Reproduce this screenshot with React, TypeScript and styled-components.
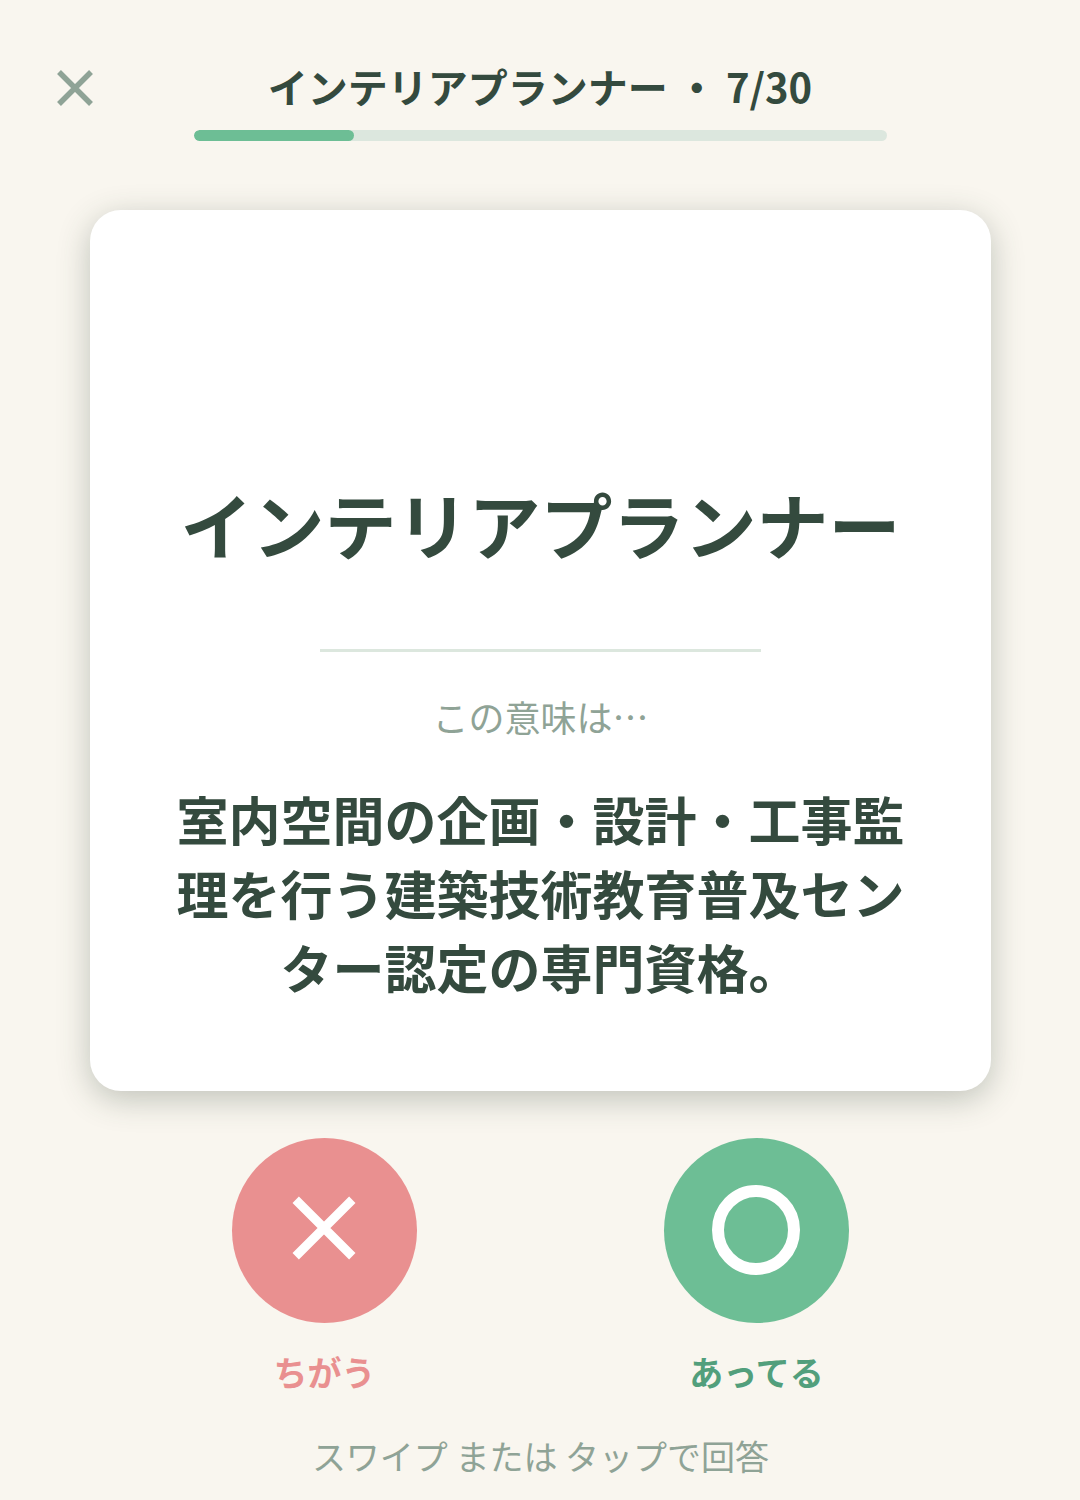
import styled, { createGlobalStyle } from "styled-components";

const GlobalStyle = createGlobalStyle`
  html, body {
    margin: 0;
    padding: 0;
    background: #f9f6ef;
    font-family: "Noto Sans CJK JP", "Noto Sans", sans-serif;
  }
`;

const Screen = styled.div`
  width: 1080px;
  height: 1500px;
  overflow: hidden;
  background: #f9f6ef;
  display: flex;
  flex-direction: column;
  align-items: center;
`;

const Header = styled.header`
  position: relative;
  width: 100%;
  height: 141px;
  flex: none;
  display: flex;
  flex-direction: column;
  align-items: center;
  padding-top: 60px;
  box-sizing: border-box;
`;

const CloseButton = styled.button`
  position: absolute;
  left: 53px;
  top: 66px;
  width: 44px;
  height: 44px;
  padding: 0;
  border: 0;
  background: none;
  display: flex;
`;

const Title = styled.div`
  height: 52px;
  line-height: 52px;
  font-size: 40px;
  font-weight: 700;
  color: #344a3e;
  white-space: pre;
`;

const Track = styled.div`
  width: 693px;
  height: 11px;
  margin-top: 18px;
  margin-left: 1px;
  border-radius: 6px;
  background: #dce7de;
  overflow: hidden;
`;

const Fill = styled.div`
  height: 100%;
  border-radius: 6px;
  background: #6dbe95;
`;

const Card = styled.main`
  width: 901px;
  height: 881px;
  margin-top: 69px;
  margin-left: 1px;
  flex: none;
  box-sizing: border-box;
  background: #fff;
  border-radius: 31px;
  box-shadow: 0 8px 32px rgba(52, 68, 56, 0.29);
  display: flex;
  flex-direction: column;
  align-items: center;
  padding-top: 263px;
`;

const Term = styled.h1`
  margin: 0;
  height: 100px;
  line-height: 100px;
  font-size: 72px;
  font-weight: 700;
  color: #344a3e;
  white-space: nowrap;
`;

const Divider = styled.hr`
  width: 441px;
  height: 3px;
  margin: 76px 0 0;
  border: 0;
  background: #dce7de;
`;

const Prompt = styled.div`
  margin-top: 38px;
  height: 52px;
  line-height: 52px;
  font-size: 36px;
  color: #8fa396;
`;

const Meaning = styled.p`
  width: 740px;
  margin: 40px 0 0;
  font-size: 52px;
  line-height: 74px;
  font-weight: 700;
  color: #344a3e;
  text-align: center;
`;

const Actions = styled.div`
  display: flex;
  gap: 247px;
  margin-top: 47px;
  margin-left: 1px;
`;

const Action = styled.div`
  width: 185px;
  display: flex;
  flex-direction: column;
  align-items: center;
`;

const Circle = styled.button<{ $bg: string }>`
  width: 185px;
  height: 185px;
  padding: 0;
  border: 0;
  border-radius: 50%;
  background: ${(p) => p.$bg};
  display: flex;
  align-items: center;
  justify-content: center;
`;

// the marks sit a little above centre in the reference
const CrossIcon = styled.svg`
  margin: 0 1px 6px 0;
`;

const RingIcon = styled.svg`
  margin: 0 1px 1px 0;
`;

const ActionLabel = styled.div<{ $color: string }>`
  margin-top: 25px;
  height: 48px;
  line-height: 48px;
  font-size: 34px;
  font-weight: 700;
  color: ${(p) => p.$color};
  white-space: nowrap;
`;

const Hint = styled.div`
  margin-top: 34px;
  margin-left: 1px;
  height: 52px;
  line-height: 52px;
  font-size: 34px;
  color: #8fa396;
  white-space: pre;
`;

function App() {
  return (
    <Screen>
      <GlobalStyle />
      <Header>
        <CloseButton aria-label="close">
          <svg width="44" height="44" viewBox="0 0 44 44">
            <path d="M6 6 L38 38 M38 6 L6 38" stroke="#8fa396" strokeWidth="5.5" fill="none" />
          </svg>
        </CloseButton>
        <Title>インテリアプランナー ・ 7/30</Title>
        <Track>
          <Fill style={{ width: "23.1%" }} />
        </Track>
      </Header>
      <Card>
        <Term>インテリアプランナー</Term>
        <Divider />
        <Prompt>この意味は…</Prompt>
        <Meaning>室内空間の企画・設計・工事監理を行う建築技術教育普及センター認定の専門資格。</Meaning>
      </Card>
      <Actions>
        <Action>
          <Circle $bg="#e99090" aria-label="ちがう">
            <CrossIcon width="64" height="64" viewBox="0 0 64 64">
              <path d="M3.7 3.7 L60.3 60.3 M60.3 3.7 L3.7 60.3" stroke="#fff" strokeWidth="9" fill="none" />
            </CrossIcon>
          </Circle>
          <ActionLabel $color="#e99090">ちがう</ActionLabel>
        </Action>
        <Action>
          <Circle $bg="#6dbe95" aria-label="あってる">
            <RingIcon width="88" height="90" viewBox="0 0 88 90">
              <ellipse cx="44" cy="45" rx="38" ry="39" stroke="#fff" strokeWidth="12" fill="none" />
            </RingIcon>
          </Circle>
          <ActionLabel $color="#529f7c">あってる</ActionLabel>
        </Action>
      </Actions>
      <Hint>スワイプ または タップで回答</Hint>
    </Screen>
  );
}

export default App;
